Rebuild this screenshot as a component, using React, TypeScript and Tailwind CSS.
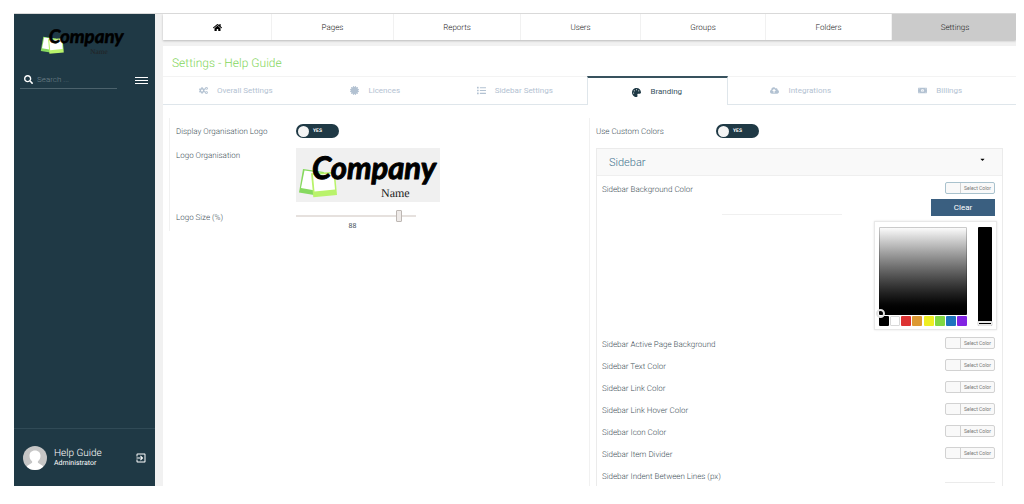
import { useState } from "react";
import {
  FaCaretDown,
  FaCertificate,
  FaCloudUploadAlt,
  FaCogs,
  FaHome,
  FaList,
  FaMoneyBillAlt,
  FaPalette,
  FaSearch,
} from "react-icons/fa";
import { MdExitToApp } from "react-icons/md";

const navItems = ["Home", "Pages", "Reports", "Users", "Groups", "Folders", "Settings"];

const tabs = [
  { label: "Overall Settings", Icon: FaCogs },
  { label: "Licences", Icon: FaCertificate },
  { label: "Sidebar Settings", Icon: FaList },
  { label: "Branding", Icon: FaPalette },
  { label: "Integrations", Icon: FaCloudUploadAlt },
  { label: "Billings", Icon: FaMoneyBillAlt },
];

const colorRows = [
  "Sidebar Active Page Background",
  "Sidebar Text Color",
  "Sidebar Link Color",
  "Sidebar Link Hover Color",
  "Sidebar Icon Color",
  "Sidebar Item Divider",
];

const swatches = [
  { name: "Black", tone: "bg-black" },
  { name: "White", tone: "bg-white border border-[#d8d8d8]" },
  { name: "Red", tone: "bg-[#dd3333]" },
  { name: "Orange", tone: "bg-[#dd9933]" },
  { name: "Yellow", tone: "bg-[#eeee22]" },
  { name: "Green", tone: "bg-[#81d742]" },
  { name: "Blue", tone: "bg-[#1e73be]" },
  { name: "Purple", tone: "bg-[#8224e3]" },
];

function CompanyLogo({ className }: { className: string }) {
  return (
    <svg viewBox="0 0 144 54" className={className} role="img" aria-label="Company Name">
      <path d="M7 21 L28 24 L24 48 L3 44.500 Z" fill="#86d95f" />
      <path d="M8.500 22.500 L26 25 L22 43 L5 40 Z" fill="#fff" />
      <path d="M15 25.300 L39 23.700 L41 47 L17.300 49.300 Z" fill="#b9f36b" />
      <path d="M17 27 L37.500 25.500 L39 41.500 L18.500 43.500 Z" fill="#fff" />
      <text
        x="16"
        y="31"
        fontFamily="Lato, sans-serif"
        fontStyle="italic"
        fontWeight="700"
        fontSize="31"
        fill="#000"
        stroke="#000"
        strokeWidth="1"
        strokeLinejoin="round"
      >
        Company
      </text>
      <text x="85" y="49" fontFamily="Liberation Serif, serif" fontSize="12" fill="#222">
        Name
      </text>
    </svg>
  );
}

function Toggle({ id }: { id: string }) {
  const [on, setOn] = useState(true);
  return (
    <label
      htmlFor={id}
      className="flex h-[14px] w-[43px] items-center gap-1 rounded-full bg-[#1f3945] px-0.5 text-[5px] leading-none font-bold text-white"
    >
      <input
        id={id}
        type="checkbox"
        role="switch"
        checked={on}
        onChange={(e) => setOn(e.target.checked)}
        className="size-[11px] appearance-none rounded-full bg-[#f4f4f4]"
      />
      {on ? "YES" : "NO"}
    </label>
  );
}

function SelectColor({ label, active = false }: { label: string; active?: boolean }) {
  return (
    <button
      type="button"
      aria-label={`${label}: Select Color`}
      className={
        active
          ? "flex h-[12px] w-[50px] rounded-[2px] border border-[#a9c2cd] bg-[#f9f9f9]"
          : "flex h-[12px] w-[50px] rounded-[2px] border border-[#d2d2d2] bg-[#f9f9f9]"
      }
    >
      <span className="h-full w-[15px] border-r border-[#d2d2d2]" />
      <span className="flex-1 text-center text-[5px] leading-[10px] font-normal text-[#777]">Select Color</span>
    </button>
  );
}

function ColorPicker() {
  return (
    <div className="flex w-[123px] justify-between border border-[#e8e8e8] bg-white px-1 pt-[5px] pb-[3px] shadow-[0_0_2px_#e4e4e4]">
      <div className="w-[88px]">
        <div className="relative h-[88px] rounded-[1px] border border-black/20 bg-linear-to-b from-white to-black bg-origin-border">
          <span className="absolute -bottom-1 -left-1 size-[9px] rounded-full border-2 border-[#e2e2e2]" />
        </div>
        <div className="mt-px flex justify-between">
          {swatches.map((s) => (
            <button key={s.name} type="button" aria-label={s.name} className={`size-[10px] rounded-[1px] ${s.tone}`} />
          ))}
        </div>
      </div>
      <div className="relative h-[99px] w-[14px] rounded-[1px] bg-black">
        <span className="absolute bottom-0 -left-px h-[5px] w-[16px] rounded-[2px] border-2 border-[#e8e8e8]" />
      </div>
    </div>
  );
}

export default function App() {
  const [size, setSize] = useState(88);

  return (
    <div className="h-screen bg-white pt-[13px] pr-2 pb-[18px] pl-[14px] font-[Roboto,sans-serif] text-[8px] font-light text-[#43525a] [text-rendering:geometricPrecision]">
      <div className="flex h-full overflow-hidden border-t border-[#d9d9d9] bg-[#f1f1f1]">
        <aside className="flex w-[141px] shrink-0 flex-col bg-[#1f3945] text-white">
          <CompanyLogo className="mt-[10px] ml-[25px] w-[87px]" />
          <div className="mt-[14px] flex items-center justify-between pr-[7px] pl-[6px]">
            <label className="flex h-[18px] w-[97px] items-center gap-1 border-b border-[#4c626c] pt-px pl-[4px]">
              <FaSearch className="size-[9px] shrink-0" />
              <input
                type="search"
                aria-label="Search"
                placeholder="Search ..."
                className="w-full min-w-0 bg-transparent pt-px outline-none placeholder:text-[#71838b]"
              />
            </label>
            <button type="button" aria-label="Menu" className="mt-[2px] flex w-[13px] flex-col gap-[2px]">
              <span className="h-px bg-white" />
              <span className="h-px bg-white" />
              <span className="h-px bg-white" />
            </button>
          </div>
          <div className="mt-auto flex h-[58px] items-center border-t border-[#304a56] pr-[8px] pl-[9px]">
            <svg viewBox="0 0 24 24" className="size-[24px]" aria-hidden="true">
              <clipPath id="avatar">
                <circle cx="12" cy="12" r="12" />
              </clipPath>
              <g clipPath="url(#avatar)">
                <rect width="24" height="24" fill="#c6c6c6" />
                <path
                  d="M12 4.500c-3.500 0-5.500 2.300-5.500 5.300 0 2.500 1 4.200 2.600 5.400v1.600L4 20v5h16v-5l-5.100-3.200v-1.600c1.600-1.200 2.600-2.900 2.600-5.400 0-3-2-5.300-5.500-5.300z"
                  fill="#fff"
                />
              </g>
            </svg>
            <div className="ml-[7px] flex-1">
              <p className="text-[10px] leading-[11px]">Help Guide</p>
              <p className="text-[7px] leading-[9px] font-normal">Administrator</p>
            </div>
            <button type="button" aria-label="Log out">
              <MdExitToApp className="size-[12px]" />
            </button>
          </div>
        </aside>

        <main className="ml-2 flex min-w-0 flex-1 flex-col">
          <nav className="grid h-[26px] shrink-0 grid-cols-[109fr_122fr_127fr_120fr_125fr_126fr_124fr] bg-white text-[#222] shadow-[0_1px_2px_#bbb]">
            {navItems.map((item) => (
              <a
                key={item}
                href={`#${item.toLowerCase()}`}
                className={
                  item === "Settings"
                    ? "flex items-center justify-center bg-[#cbcbcb] pt-px pl-[2px]"
                    : "flex items-center justify-center border-r border-[#f1f1f1] pt-px"
                }
              >
                {item === "Home" ? <FaHome aria-label="Home" className="size-[9px] text-black" /> : item}
              </a>
            ))}
          </nav>

          <section className="mt-[6px] flex min-h-0 flex-1 flex-col overflow-hidden bg-white">
            <h1 className="h-[30px] shrink-0 pl-[9px] text-[12px] leading-[34px] text-[#84d65c]">
              Settings - Help Guide
            </h1>
            <div
              role="tablist"
              className="flex h-[29px] shrink-0 border-t border-b border-t-[#f3f3f3] border-b-[#dfe6eb] pr-[6px] pl-[3px]"
            >
              {tabs.map(({ label, Icon }) => (
                <button
                  key={label}
                  type="button"
                  role="tab"
                  aria-selected={label === "Branding"}
                  className={
                    label === "Branding"
                      ? "-my-px mr-[3px] ml-[2px] flex flex-1 items-center justify-center gap-[9px] border-x border-t-2 border-x-[#dfe6eb] border-t-[#38525e] bg-white pt-px font-normal text-[#38525e]"
                      : "flex flex-1 items-center justify-center gap-[9px] font-normal text-[#b3c2d2]"
                  }
                >
                  <Icon className={label === "Branding" ? "size-[9px] text-[#1f3945]" : "size-[9px]"} />
                  {label}
                </button>
              ))}
            </div>

            <div className="mt-[13px] grid min-h-0 flex-1 grid-cols-[420fr_414fr] pr-[13px] pl-[6px]">
              <div className="h-[113px] border-l border-[#f1f1f1] pl-[6px]">
                <div className="grid grid-cols-[120px_1fr] pt-[6px]">
                  <label htmlFor="display-logo" className="leading-[16px]">
                    Display Organisation Logo
                  </label>
                  <Toggle id="display-logo" />
                </div>
                <div className="mt-[8px] grid grid-cols-[120px_1fr]">
                  <span className="leading-[16px]">Logo Organisation</span>
                  <CompanyLogo className="h-[54px] w-[144px] bg-[#f0f0f0]" />
                </div>
                <div className="mt-[8px] grid grid-cols-[120px_1fr]">
                  <label htmlFor="logo-size" className="leading-[16px]">
                    Logo Size (%)
                  </label>
                  <div className="w-[120px]">
                    <input
                      id="logo-size"
                      type="range"
                      value={size}
                      onChange={(e) => setSize(Number(e.target.value))}
                      className="block h-[12px] w-full appearance-none bg-transparent [&::-webkit-slider-runnable-track]:h-[2px] [&::-webkit-slider-runnable-track]:bg-[#e6e1de] [&::-webkit-slider-thumb]:mt-[-5px] [&::-webkit-slider-thumb]:h-[12px] [&::-webkit-slider-thumb]:w-[6px] [&::-webkit-slider-thumb]:appearance-none [&::-webkit-slider-thumb]:rounded-[1px] [&::-webkit-slider-thumb]:border [&::-webkit-slider-thumb]:border-[#bdb7b3] [&::-webkit-slider-thumb]:bg-[#eeeae8]"
                    />
                    <output htmlFor="logo-size" className="block w-[113px] text-center text-[7px] leading-[8px] font-normal">
                      {size}
                    </output>
                  </div>
                </div>
              </div>

              <div className="border-l border-[#f1f1f1] pl-[6px]">
                <div className="grid grid-cols-[120px_1fr] pt-[6px]">
                  <label htmlFor="custom-colors" className="leading-[16px]">
                    Use Custom Colors
                  </label>
                  <Toggle id="custom-colors" />
                </div>

                <div className="mt-[8px] h-[400px] border border-[#ebebeb]">
                  <button
                    type="button"
                    aria-expanded="true"
                    className="flex h-[27px] w-full justify-between border-b border-[#efefef] bg-[#f9f9f9] pr-[16px] pl-[12px]"
                  >
                    <span className="text-[11px] leading-[27px] text-[#41718e]">Sidebar</span>
                    <FaCaretDown className="mt-[7px] size-[7px] text-black" />
                  </button>

                  <div className="pr-[7px] pl-[5px]">
                    <div className="grid grid-cols-[120px_120px_1fr] pt-[6px]">
                      <label htmlFor="sidebar-bg" className="leading-[16px]">
                        Sidebar Background Color
                      </label>
                      <input
                        id="sidebar-bg"
                        type="text"
                        className="h-[33px] w-full min-w-0 border-b border-[#f0f0f0] outline-none"
                      />
                      <div className="flex flex-col items-end">
                        <SelectColor label="Sidebar Background Color" active />
                        <button
                          type="button"
                          className="mt-[5px] h-[17px] w-[64px] bg-[#3a5f80] font-normal text-white"
                        >
                          Clear
                        </button>
                        <div className="-mr-[2px] mt-[5px]">
                          <ColorPicker />
                        </div>
                      </div>
                    </div>

                    <div className="mt-[7px]">
                      {colorRows.map((label) => (
                        <div key={label} className="flex h-[22px] items-start justify-between">
                          <span className="leading-[16px]">{label}</span>
                          <SelectColor label={label} />
                        </div>
                      ))}
                      <div className="flex h-[22px] items-start justify-between">
                        <label htmlFor="indent" className="leading-[16px]">
                          Sidebar Indent Between Lines (px)
                        </label>
                        <input
                          id="indent"
                          type="text"
                          className="h-[14px] w-[50px] border-b border-[#ebebeb] outline-none"
                        />
                      </div>
                    </div>
                  </div>
                </div>
              </div>
            </div>
          </section>
        </main>
      </div>
    </div>
  );
}
